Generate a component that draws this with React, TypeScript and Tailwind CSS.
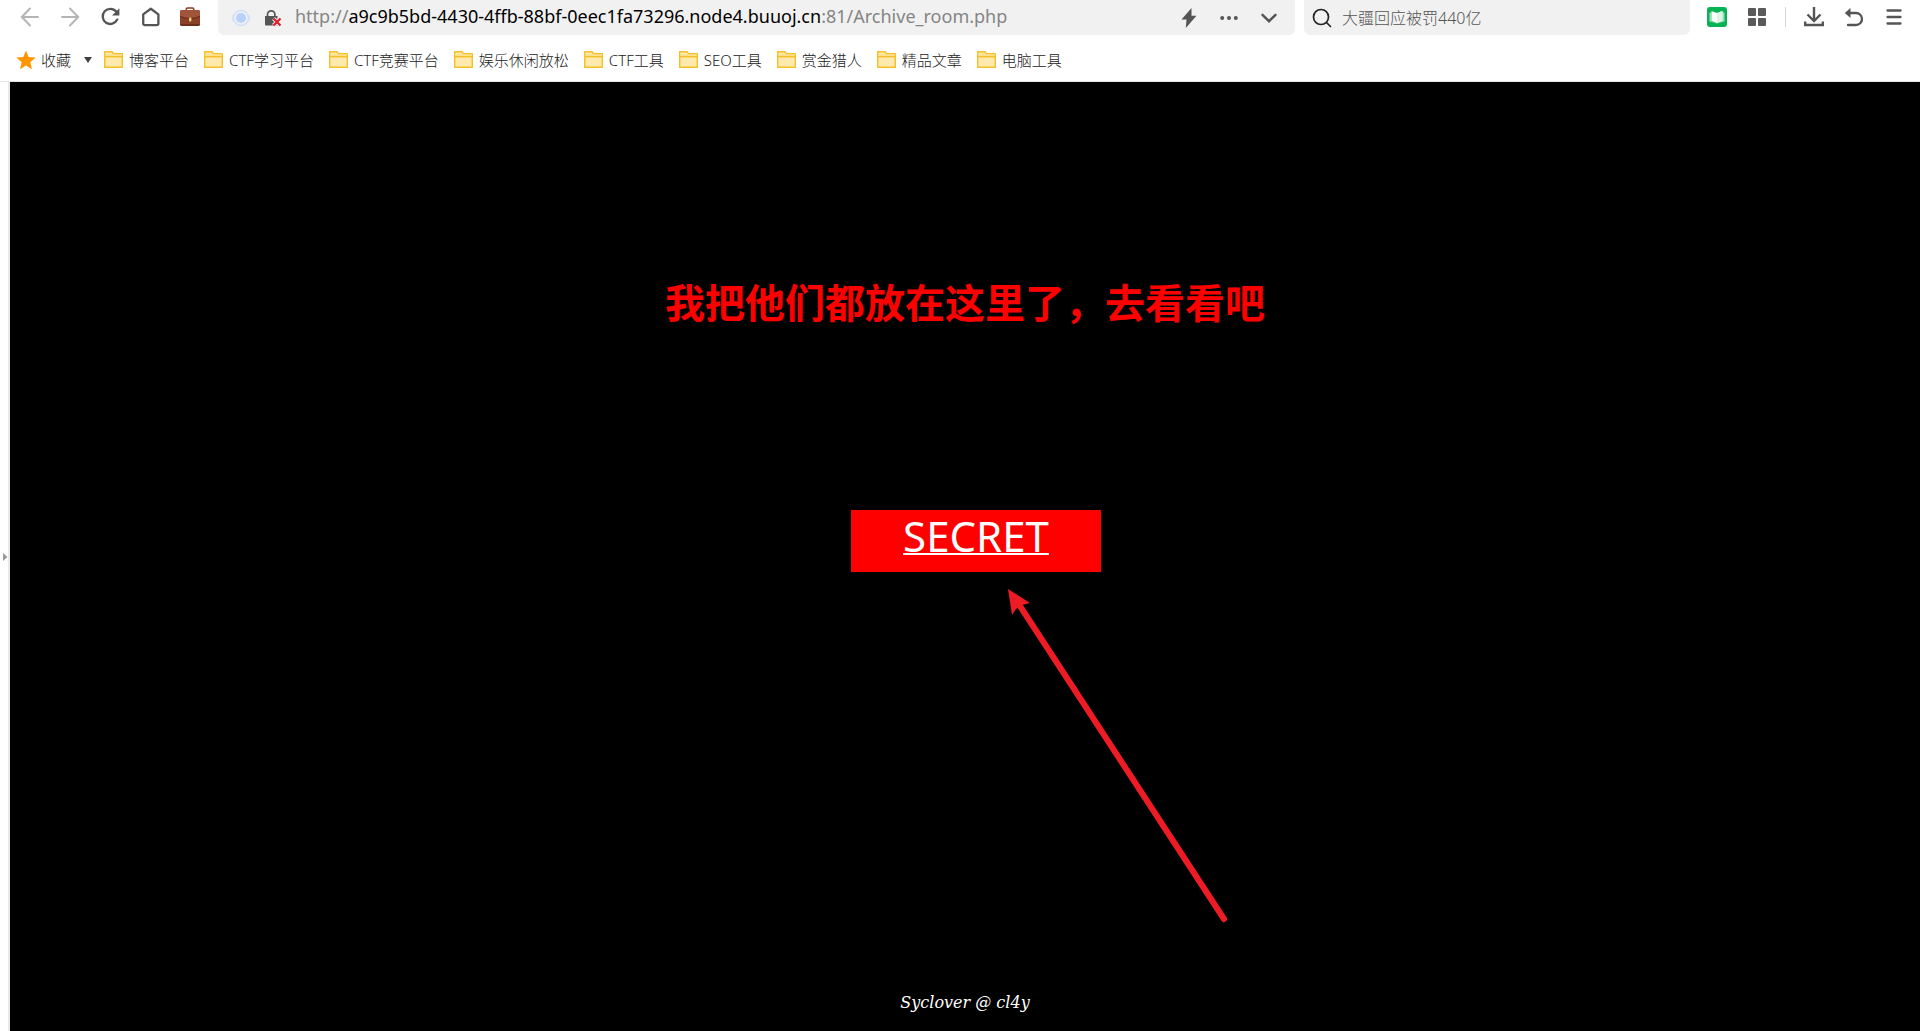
import React from "react";

const bookmarks = [
  "博客平台",
  "CTF学习平台",
  "CTF竞赛平台",
  "娱乐休闲放松",
  "CTF工具",
  "SEO工具",
  "赏金猎人",
  "精品文章",
  "电脑工具",
];

function IconButton({ label, children }: { label: string; children: React.ReactNode }) {
  return (
    <button type="button" aria-label={label} className="flex size-5 shrink-0 items-center justify-center">
      {children}
    </button>
  );
}

function BackIcon() {
  return (
    <svg width="20" height="20" viewBox="0 0 20 20" fill="none" stroke="#b5b5b5" strokeWidth="2" strokeLinecap="round">
      <path d="M18 10H2M10 1.5L1.8 10l8.2 8.5" />
    </svg>
  );
}

function ForwardIcon() {
  return (
    <svg width="20" height="20" viewBox="0 0 20 20" fill="none" stroke="#b5b5b5" strokeWidth="2" strokeLinecap="round">
      <path d="M2 10h16M10 1.5l8.2 8.5-8.2 8.5" />
    </svg>
  );
}

function ReloadIcon() {
  return (
    <svg width="20" height="20" viewBox="0 0 20 20" fill="none">
      <path d="M17.200 12.600A7.600 7.600 0 1 1 16.200 4.600" stroke="#555" strokeWidth="2.300" strokeLinecap="round" />
      <path d="M19.400 1.200v7.200H12z" fill="#555" />
    </svg>
  );
}

function HomeIcon() {
  return (
    <svg width="20" height="20" viewBox="0 0 20 20" fill="none" stroke="#555" strokeWidth="2.300" strokeLinejoin="round">
      <path d="M10.800 1.800l-7.600 5.600v9.200a1.600 1.600 0 0 0 1.600 1.600h12a1.600 1.600 0 0 0 1.600-1.600V7.400z" />
    </svg>
  );
}

function BriefcaseIcon() {
  return (
    <svg width="20" height="20" viewBox="0 0 20 20">
      <path d="M6.200 4V2.200Q6.200 1 7.500 1h5q1.300 0 1.300 1.200V4" fill="none" stroke="#8a3d22" strokeWidth="1.500" />
      <rect x="0" y="3" width="20" height="16" rx="2" fill="#8b4128" />
      <path d="M0 5a2 2 0 0 1 2-2h16a2 2 0 0 1 2 2v4q-4 2.500-10 2.500T0 9z" fill="#a0543a" />
      <path d="M0 9.200q4 2.300 10 2.300t10-2.300" fill="none" stroke="#64291a" />
      <path d="M0 17h20a2 2 0 0 1-2 2H2a2 2 0 0 1-2-2z" fill="#6f2f1d" />
      <rect x="9" y="10.500" width="2.400" height="4" rx="1" fill="#f2d27c" />
    </svg>
  );
}

function SiteIcon() {
  return (
    <svg width="18" height="18" viewBox="0 0 18 18" fill="none">
      <circle cx="9" cy="9" r="7.500" stroke="#cfe0fb" strokeWidth="1.500" />
      <circle cx="9" cy="9" r="5" fill="#b7d1fc" />
      <path d="M1 6v6M17 6v6" stroke="#cfe0fb" strokeWidth="1.500" />
    </svg>
  );
}

function InsecureIcon() {
  return (
    <svg width="18" height="18" viewBox="0 0 18 18" fill="none">
      <path d="M3.500 8V5.500a3.700 3.700 0 0 1 7.400 0V8" stroke="#555" strokeWidth="1.700" />
      <path d="M1 7h12.500v9.500H2A1 1 0 0 1 1 15.500z" fill="#555" />
      <path d="M9.500 9.500l7 7M16.500 9.500l-7 7" stroke="#f1f1f1" strokeWidth="4" />
      <path d="M9.500 9.500l7 7M16.500 9.500l-7 7" stroke="#d91d2a" strokeWidth="2.200" />
    </svg>
  );
}

function FolderIcon() {
  return (
    <svg width="19" height="17" viewBox="0 0 19 17" className="shrink-0">
      <path d="M.7.700h7.300l1.500 2h8.800v13.600H.700z" fill="#ffeaae" stroke="#f6bf26" strokeWidth="1.400" strokeLinejoin="round" />
      <path d="M1 5.700h17" stroke="#f6bf26" strokeWidth="1.400" />
      <path d="M1.400 3.300h16.200v1.600H1.400z" fill="#ffe08a" />
    </svg>
  );
}

function Toolbar() {
  return (
    <div className="flex h-[35px] items-start">
      <nav aria-label="导航" className="flex h-[34px] w-[218px] shrink-0 items-center gap-5 pl-5">
        <IconButton label="后退"><BackIcon /></IconButton>
        <IconButton label="前进"><ForwardIcon /></IconButton>
        <IconButton label="刷新"><ReloadIcon /></IconButton>
        <IconButton label="主页"><HomeIcon /></IconButton>
        <IconButton label="工具箱"><BriefcaseIcon /></IconButton>
      </nav>
      <div className="flex h-[35px] grow items-center rounded-b-md bg-[#f1f1f1] pr-4 pl-[14px]">
        <SiteIcon />
        <span className="ml-[14px] shrink-0"><InsecureIcon /></span>
        <a href="#address" className="ml-[13px] grow pb-1 text-[18px] leading-6 whitespace-nowrap text-[#858585]">
          http://<span className="text-black">a9c9b5bd-4430-4ffb-88bf-0eec1fa73296.node4.buuoj.cn</span>:81/Archive_room.php
        </a>
        <div className="flex items-center gap-5">
          <IconButton label="极速模式">
            <svg width="16" height="20" viewBox="0 0 16 20" fill="#555"><path d="M10.500 0L.5 11.500h5L4.800 20l10.700-12.300h-5z" /></svg>
          </IconButton>
          <IconButton label="更多">
            <svg width="18" height="4" viewBox="0 0 18 4" fill="#555"><circle cx="2.200" cy="2" r="2" /><circle cx="9" cy="2" r="2" /><circle cx="15.800" cy="2" r="2" /></svg>
          </IconButton>
          <IconButton label="展开">
            <svg width="16" height="10" viewBox="0 0 16 10" fill="none" stroke="#555" strokeWidth="2.400" strokeLinecap="round"><path d="M1.500 1.800L8 8.200l6.500-6.400" /></svg>
          </IconButton>
        </div>
      </div>
      <label className="ml-[9px] flex h-[35px] w-[386px] shrink-0 items-center rounded-b-md bg-[#f1f1f1] pl-2">
        <svg width="20" height="20" viewBox="0 0 20 20" fill="none" stroke="#222" strokeWidth="1.700" strokeLinecap="round">
          <circle cx="9" cy="9" r="7.500" />
          <path d="M14.500 14.500l4 4" />
        </svg>
        <input
          aria-label="搜索"
          placeholder="大疆回应被罚440亿"
          className="ml-[10px] grow bg-transparent text-base leading-6 font-light outline-none placeholder:text-[#555]"
        />
      </label>
      <div className="flex h-[34px] w-[230px] shrink-0 items-center gap-5 pl-[17px]">
        <IconButton label="阅读">
          <svg width="20" height="20" viewBox="0 0 20 20">
            <rect width="20" height="20" rx="3" fill="#07b253" />
            <path d="M2.500 5.500h2v9l5.500 1.500 5.500-1.500v-9h2v9L10 16.500l-7.500-2z" fill="#9be0b8" />
            <path d="M4.500 4l5.500 2 5.500-2v10L10 16l-5.500-2z" fill="#fff" />
            <path d="M10 6v10l5.500-2V4z" fill="#dcf5e6" />
          </svg>
        </IconButton>
        <IconButton label="应用">
          <svg width="18" height="18" viewBox="0 0 18 18" fill="#5a5a5a">
            <rect width="8" height="8" rx="1" /><rect x="10" width="8" height="8" rx="1" /><rect y="10" width="8" height="8" rx="1" /><rect x="10" y="10" width="8" height="8" rx="1" />
          </svg>
        </IconButton>
        <span className="-mx-[2px] h-5 w-px bg-[#d5d5d5]" />
        <IconButton label="下载">
          <svg width="20" height="20" viewBox="0 0 20 20" fill="none" stroke="#555" strokeWidth="2.400">
            <path d="M10 0v13.500M3.500 7.500l6.500 6.500 6.500-6.500M1.200 14.500V18h17.600v-3.500" />
          </svg>
        </IconButton>
        <IconButton label="撤销">
          <svg width="20" height="20" viewBox="0 0 20 20" fill="none">
            <path d="M5 6h7a6 6 0 0 1 0 12H4" stroke="#555" strokeWidth="2.300" strokeLinecap="round" />
            <path d="M.8 6l5.700-5v10z" fill="#555" />
          </svg>
        </IconButton>
        <IconButton label="菜单">
          <svg width="16" height="16" viewBox="0 0 16 16" stroke="#555" strokeWidth="2.300" strokeLinecap="round"><path d="M1.500 1.500h13M1.500 8h13M1.500 14.500h13" /></svg>
        </IconButton>
      </div>
    </div>
  );
}

function BookmarksBar() {
  return (
    <nav aria-label="收藏夹" className="flex h-[46px] items-center gap-[15px] pt-[3px] pl-4 text-[15px] leading-5 font-light whitespace-nowrap text-[#222]">
      <button type="button" className="-mr-[3px] flex items-center">
        <svg width="20" height="20" viewBox="0 0 20 20" fill="#ff9500">
          <path d="M10 .5l2.700 6.600 7 .500-5.400 4.600 1.700 7L10 15.500l-6 3.700 1.700-7L.3 7.600l7-.500z" />
        </svg>
        <span className="ml-[5px]">收藏</span>
        <svg width="8" height="6" viewBox="0 0 8 6" fill="#404040" className="ml-[13px]"><path d="M0 0h8L4 6z" /></svg>
      </button>
      {bookmarks.map((name) => (
        <a key={name} href="#bookmark" className="flex items-center gap-[6px]">
          <FolderIcon />
          {name}
        </a>
      ))}
    </nav>
  );
}

function RedArrow() {
  return (
    <svg width="224" height="340" viewBox="0 0 224 340" className="pointer-events-none absolute top-[78px] left-[156px]" aria-hidden="true">
      <path d="M11 15L217 331" stroke="#ed1c24" strokeWidth="6" strokeLinecap="round" />
      <path d="M1 1l22 14-8 2-6 4-4 6z" fill="#ed1c24" />
    </svg>
  );
}

export default function App() {
  return (
    <div className="flex min-h-screen flex-col bg-white font-['Noto_Sans','Noto_Sans_CJK_SC',sans-serif]">
      <header className="border-b border-[#e5e5e5]">
        <Toolbar />
        <BookmarksBar />
      </header>
      <div className="flex grow">
        <button type="button" aria-label="展开侧栏" className="flex w-[10px] shrink-0 items-center justify-end border-r-2 border-[#e9e9e9]">
          <svg width="5" height="8" viewBox="0 0 5 8" fill="#999"><path d="M0 0l4.500 4L0 8z" /></svg>
        </button>
        <main className="flex grow flex-col items-center bg-black">
          <h1 className="mt-[191px] text-[40px] leading-[60px] font-bold text-[#f00]">我把他们都放在这里了，去看看吧</h1>
          <a
            href="#secret"
            className="relative mt-[177px] ml-[22px] block h-[62px] w-[250px] bg-[#f00] text-center text-[42px] leading-[52px] text-white underline decoration-2 underline-offset-1 [text-decoration-skip-ink:none]"
          >
            SECRET
            <RedArrow />
          </a>
          <footer className="mt-auto pb-4 font-['DejaVu_Serif',serif] text-[16px] leading-6 text-white italic">Syclover @ cl4y</footer>
        </main>
      </div>
    </div>
  );
}
